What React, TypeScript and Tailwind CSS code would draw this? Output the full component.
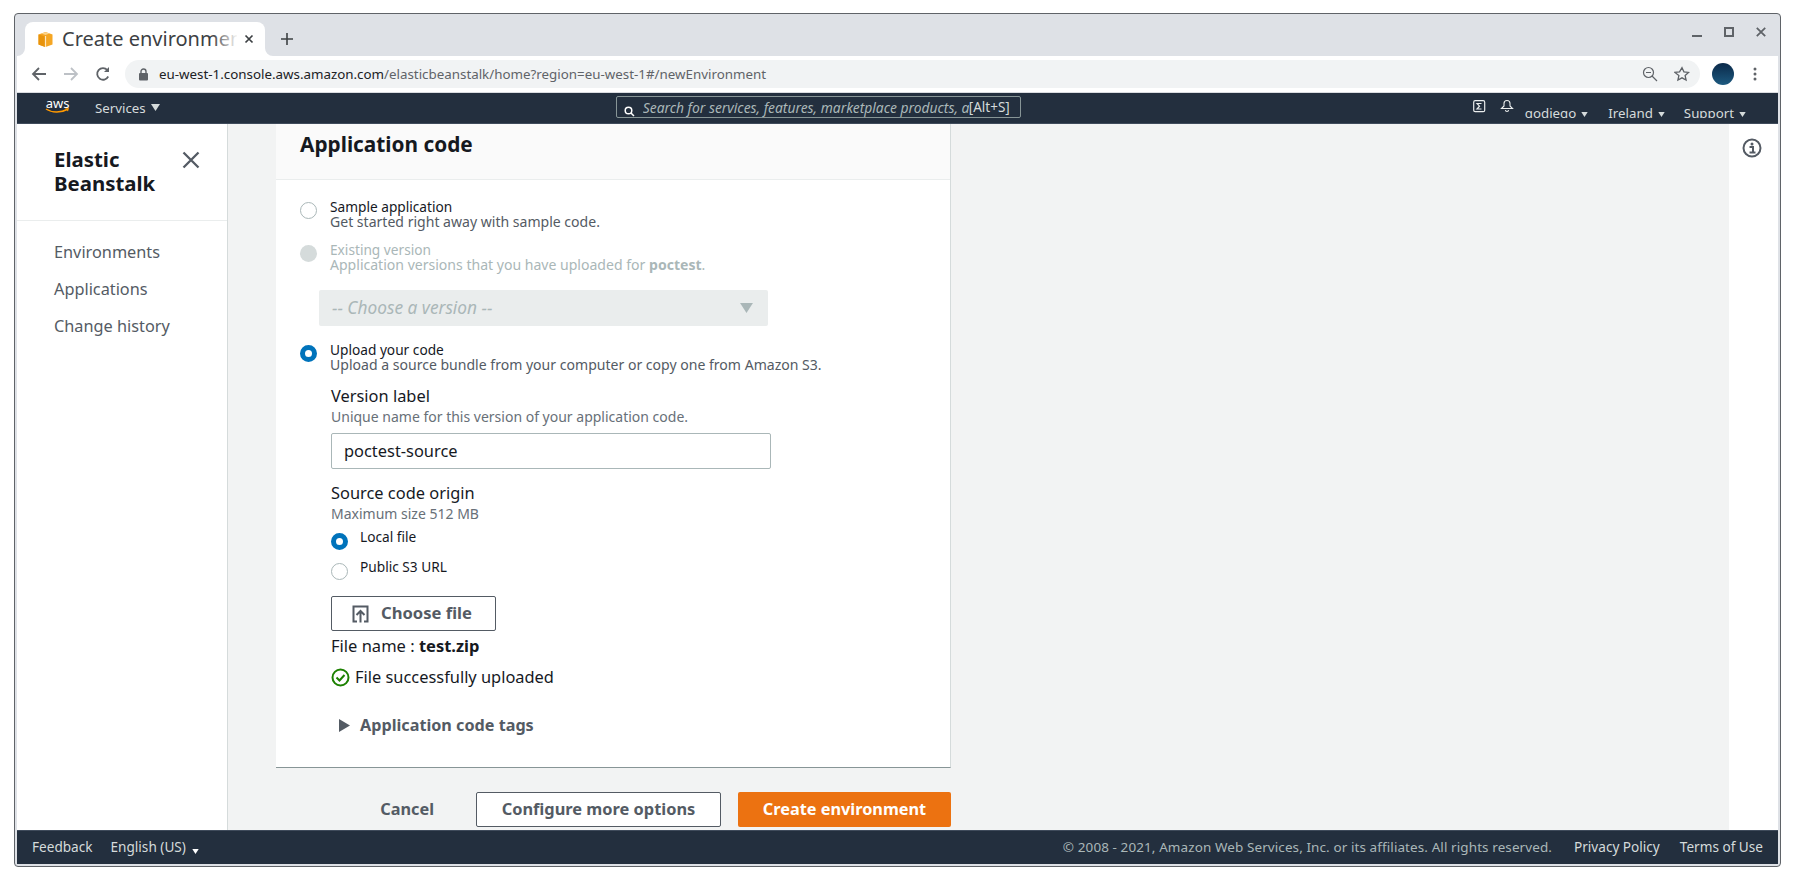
import React from "react";

const Tri = ({ c = "" }: { c?: string }) => (
  <svg width="9" height="7" viewBox="0 0 9 7" className={c}><path d="M0 0h9L4.5 7z" fill="currentColor" /></svg>
);

function Radio({ state }: { state: "off" | "on" | "disabled" }) {
  if (state === "on")
    return <span className="w-[17px] h-[17px] rounded-full border-[5px] border-[#0073bb] bg-white shrink-0" />;
  if (state === "disabled")
    return <span className="w-[17px] h-[17px] rounded-full bg-[#d5dbdb] shrink-0" />;
  return <span className="w-[17px] h-[17px] rounded-full border border-[#aab7b8] bg-white shrink-0" />;
}

function Option({ state, title, children, mt }: { state: "off" | "on" | "disabled"; title: string; children: React.ReactNode; mt: string }) {
  const dim = state === "disabled";
  return (
    <div className={`flex ${mt}`}>
      <div className="w-[54px] pl-[24px] pt-[3px] shrink-0 flex"><Radio state={state} /></div>
      <div>
        <div className={`text-[13.7px] leading-[15px] ${dim ? "text-[#aab7b8]" : "text-[#16191f]"}`}>{title}</div>
        <div className={`text-[14.05px] leading-[16px] ${dim ? "text-[#aab7b8]" : "text-[#545b64]"}`}>{children}</div>
      </div>
    </div>
  );
}

export default function App() {
  return (
    <div className="w-[1793px] h-[884px] bg-white pt-[13px] pl-[14px] overflow-hidden [font-family:'Noto_Sans',sans-serif]">
      <div className="w-[1767px] h-[854px] bg-[#dee1e6] border border-[#5f6368] border-t-[1.5px] rounded-[4px] px-[2px] pb-[2px] flex flex-col overflow-hidden">
        {/* tab strip */}
        <div className="h-[42px] flex items-end shrink-0">
          <div className="ml-[8px] w-[240px] h-[34px] bg-white rounded-t-[8px] flex items-center pl-[13px] relative">
            <svg width="8" height="8" viewBox="0 0 8 8" className="absolute -left-[8px] bottom-0"><path d="M8 0v8H0a8 8 0 0 0 8-8z" fill="#fff" /></svg>
            <svg width="8" height="8" viewBox="0 0 8 8" className="absolute -right-[8px] bottom-0"><path d="M0 0v8h8a8 8 0 0 1-8-8z" fill="#fff" /></svg>
            <svg width="15" height="15" viewBox="0 0 15 15" className="shrink-0">
              <path d="M7.500 0l7 2.500v10l-7 2.500-7-2.500v-10z" fill="#f5a623" />
              <path d="M7 4.500L.5 2.500v10L7 15z" fill="#e8930c" />
              <path d="M3.500 1.500l4-1.300 4 1.300-4 1.500z" fill="#fbd38d" />
              <path d="M6.900 4h1.200v11H6.900z" fill="#fde7c2" />
            </svg>
            <span className="ml-[9px] w-[175px] overflow-hidden whitespace-nowrap text-[20px] text-[#3c4043] leading-[26px]">Create environment</span>
            <span className="absolute left-[187px] top-0 w-[26px] h-full bg-gradient-to-r from-transparent to-white" />
            <svg width="10" height="10" viewBox="0 0 10 10" className="absolute right-[11px] top-[12px]"><path d="M1.500 1.500l7 7M8.500 1.500l-7 7" stroke="#3c4043" strokeWidth="1.700" /></svg>
          </div>
          <svg width="14" height="14" viewBox="0 0 14 14" className="ml-[15px] mb-[10px]"><path d="M7 1v12M1 7h12" stroke="#3c4043" strokeWidth="1.600" /></svg>
          <div className="ml-auto flex items-center gap-[22px] self-start mt-[13px] pr-[12px]">
            <span className="w-[10px] h-[10px] flex items-end"><span className="w-full h-[2px] bg-[#5f6368]" /></span>
            <span className="w-[10px] h-[10px] border-2 border-[#5f6368]" />
            <svg width="10" height="10" viewBox="0 0 10 10"><path d="M.8.8l8.400 8.400M9.200.8L.8 9.200" stroke="#5f6368" strokeWidth="1.800" /></svg>
          </div>
        </div>
        {/* toolbar */}
        <div className="h-[37px] bg-white flex items-center shrink-0 border-b border-[#dadce0]">
          <svg width="16" height="16" viewBox="0 0 16 16" className="ml-[14px]"><path d="M15 8H2M8 2L2 8l6 6" fill="none" stroke="#5f6368" strokeWidth="1.800" /></svg>
          <svg width="16" height="16" viewBox="0 0 16 16" className="ml-[16px]"><path d="M1 8h13M8 2l6 6-6 6" fill="none" stroke="#bdc1c6" strokeWidth="1.800" /></svg>
          <svg width="16" height="16" viewBox="0 0 16 16" className="ml-[16px]"><path d="M13.200 10.500A5.800 5.800 0 1 1 12.300 4" fill="none" stroke="#5f6368" strokeWidth="1.800" /><path d="M14 1v5H9z" fill="#5f6368" /></svg>
          <div className="ml-[14px] w-[1575px] h-[28px] rounded-full bg-[#f1f3f4] flex items-center pl-[13px] pr-[10px]">
            <svg width="11" height="13" viewBox="0 0 11 13"><path d="M3 5V3.500a2.500 2.500 0 0 1 5 0V5" fill="none" stroke="#5f6368" strokeWidth="1.400" /><rect x="1" y="5" width="9" height="7.500" rx="1" fill="#5f6368" /></svg>
            <span className="ml-[10px] text-[13.35px] text-[#202124] whitespace-nowrap">eu-west-1.console.aws.amazon.com<span className="text-[#5f6368]">/elasticbeanstalk/home?region=eu-west-1#/newEnvironment</span></span>
            <svg width="16" height="16" viewBox="0 0 16 16" className="ml-auto"><circle cx="6.500" cy="6.500" r="5" fill="none" stroke="#5f6368" strokeWidth="1.200" /><path d="M10 10l5 5M4 6.500h5" stroke="#5f6368" strokeWidth="1.200" /></svg>
            <svg width="16" height="16" viewBox="0 0 24 24" className="ml-[16px]"><path d="M12 2.500l2.900 6.300 6.900.8-5.100 4.700 1.400 6.800-6.100-3.400-6.100 3.400 1.400-6.800L1.300 9.600l7-.8z" fill="none" stroke="#5f6368" strokeWidth="2" /></svg>
          </div>
          <span className="ml-[12px] w-[22px] h-[22px] rounded-full bg-gradient-to-b from-[#0b2a4a] to-[#1d5a80] shrink-0" />
          <svg width="4" height="14" viewBox="0 0 4 14" className="ml-[19px]"><circle cx="2" cy="2" r="1.500" fill="#5f6368" /><circle cx="2" cy="7" r="1.500" fill="#5f6368" /><circle cx="2" cy="12" r="1.500" fill="#5f6368" /></svg>
        </div>
        {/* aws nav */}
        <div className="h-[31px] bg-[#232f3e] shrink-0 border-b border-[#3f4b5b] text-[#d5dbdb] text-[13.3px]">
          <div className="h-[25px] flex items-start overflow-hidden">
            <div className="ml-[28px] mt-[5px] w-[25px] flex flex-col items-center text-white">
              <span className="text-[13px] leading-[10px] text-white">aws</span>
              <svg width="25" height="6" viewBox="0 0 25 6"><path d="M1 1c6 4 15 4 21 .5" fill="none" stroke="#ff9900" strokeWidth="1.500" /><path d="M20 .5l4-.5-1 3.500z" fill="#ff9900" /></svg>
            </div>
            <span className="ml-[25px] mt-[6px] leading-[18px]">Services</span>
            <Tri c="ml-[5px] mt-[11px] text-[#d5dbdb]" />
            <div className="ml-[456px] mt-[3px] w-[405px] h-[22px] border border-[#879596] rounded-[2px] flex items-center pl-[7px] shrink-0">
              <svg width="11" height="11" viewBox="0 0 11 11" className="mt-[8px] shrink-0"><circle cx="4.500" cy="4.500" r="3.300" fill="none" stroke="#fff" strokeWidth="1.500" /><path d="M7 7l3 3" stroke="#fff" strokeWidth="1.500" /></svg>
              <span className="ml-[8px] mt-[2px] w-[326px] overflow-hidden whitespace-nowrap italic text-[13.85px] text-[#aab7b8]">Search for services, features, marketplace products, and docs</span>
              <span className="mt-[1px] text-[13.5px] text-[#d5dbdb]">[Alt+S]</span>
            </div>
            <svg width="14" height="14" viewBox="0 0 14 14" className="ml-[452px] mt-[7px] shrink-0"><rect x=".7" y=".7" width="11" height="11" rx="1.500" fill="none" stroke="#eaeded" strokeWidth="1.200" /><path d="M8.500 3.500H4L6.500 6.200 4 9h4.500" fill="none" stroke="#eaeded" strokeWidth="1.200" /></svg>
            <svg width="14" height="14" viewBox="0 0 14 14" className="ml-[13px] mt-[6px] shrink-0"><path d="M1.500 9.500L4 7V4.500a3 3 0 0 1 6 0V7l2.500 2.500zM5.500 11a1.500 1.500 0 0 0 3 0" fill="none" stroke="#eaeded" strokeWidth="1.100" /></svg>
            <span className="ml-[11px] mt-[11px] leading-[18px]">godiego</span><Tri c="ml-[5px] mt-[19px] w-[7px] h-[5px]" />
            <span className="ml-[20px] mt-[11px] leading-[18px]">Ireland</span><Tri c="ml-[5px] mt-[19px] w-[7px] h-[5px]" />
            <span className="ml-[19px] mt-[11px] leading-[18px]">Support</span><Tri c="ml-[5px] mt-[19px] w-[7px] h-[5px]" />
          </div>
        </div>
        {/* body */}
        <div className="flex-1 min-h-0 flex bg-[#f2f3f3] overflow-hidden">
          <aside className="w-[211px] bg-white border-r border-[#d5dbdb] shrink-0">
            <div className="h-[97px] border-b border-[#eaeded] pl-[37px] pt-[23px] relative">
              <div className="text-[20.4px] leading-[24px] font-bold text-[#16191f]">Elastic<br />Beanstalk</div>
              <svg width="18" height="18" viewBox="0 0 18 18" className="absolute left-[165px] top-[27px]"><path d="M1.500 1.500l15 15M16.500 1.500l-15 15" stroke="#545b64" strokeWidth="2.300" /></svg>
            </div>
            <nav className="pl-[37px] pt-[13px] text-[16.3px] leading-[37px] text-[#545b64]">
              <div>Environments</div>
              <div>Applications</div>
              <div>Change history</div>
            </nav>
          </aside>
          <main className="flex-1 min-w-0 pl-[48px] flex">
            <div className="w-[675px] shrink-0">
              <section className="h-[644px] bg-white border-r border-b border-r-[#d5dbdb] border-b-[#879596]">
                <div className="h-[56px] bg-[#fafafa] border-b border-[#eaeded] pl-[24px] pt-[5px]">
                  <h2 className="text-[20.8px] leading-[30px] font-bold text-[#16191f]">Application code</h2>
                </div>
                <Option state="off" title="Sample application" mt="mt-[19px]">Get started right away with sample code.</Option>
                <Option state="disabled" title="Existing version" mt="mt-[12px]">Application versions that you have uploaded for <b>poctest</b>.</Option>
                <div className="ml-[43px] mt-[17px] w-[449px] h-[36px] bg-[#eaeded] rounded-[2px] flex items-center justify-between pl-[13px] pr-[15px]">
                  <span className="italic text-[17.3px] text-[#aab7b8]">-- Choose a version --</span>
                  <Tri c="w-[13px] h-[10px] text-[#aab7b8]" />
                </div>
                <Option state="on" title="Upload your code" mt="mt-[16px]">Upload a source bundle from your computer or copy one from Amazon S3.</Option>
                <div className="pl-[55px]">
                  <div className="mt-[12px] text-[16.4px] leading-[22px] text-[#16191f]">Version label</div>
                  <div className="text-[14px] leading-[20px] text-[#687078]">Unique name for this version of your application code.</div>
                  <div className="mt-[6px] w-[440px] h-[36px] border border-[#aab7b8] rounded-[2px] flex items-center pl-[12px] text-[16.4px] text-[#16191f]">poctest-source</div>
                  <div className="mt-[13px] text-[16.4px] leading-[22px] text-[#16191f]">Source code origin</div>
                  <div className="text-[14px] leading-[20px] text-[#687078]">Maximum size 512 MB</div>
                  <div className="mt-[3px] flex h-[30px]">
                    <span className="pt-[6px] flex"><Radio state="on" /></span>
                    <span className="ml-[12px] text-[13.7px] leading-[20px] text-[#16191f]">Local file</span>
                  </div>
                  <div className="flex h-[30px]">
                    <span className="pt-[6px] flex"><Radio state="off" /></span>
                    <span className="ml-[12px] text-[13.7px] leading-[20px] text-[#16191f]">Public S3 URL</span>
                  </div>
                  <div className="mt-[9px] w-[165px] h-[35px] border border-[#545b64] rounded-[2px] flex items-center justify-center gap-[12px] pr-[3px] text-[16.6px] font-bold text-[#545b64]">
                    <svg width="17" height="18" viewBox="0 0 17 18"><path d="M5 16.500H1.500V1.500h14v15H12" fill="none" stroke="#545b64" strokeWidth="2" /><path d="M8.500 17.500V6M4.500 10l4-4 4 4" fill="none" stroke="#545b64" strokeWidth="2" /></svg>
                    <span>Choose file</span>
                  </div>
                  <div className="mt-[3px] text-[16.5px] leading-[24px] text-[#16191f]">File name : <b>test.zip</b></div>
                  <div className="mt-[7px] flex items-center text-[16.4px] leading-[24px] text-[#16191f]">
                    <svg width="19" height="19" viewBox="0 0 19 19" className="mr-[5px]"><circle cx="9.500" cy="9.500" r="8" fill="none" stroke="#1d8102" strokeWidth="2" /><path d="M5.500 9.500l3 3 5-5.500" fill="none" stroke="#1d8102" strokeWidth="2" /></svg>
                    File successfully uploaded
                  </div>
                  <div className="mt-[24px] ml-[8px] flex items-center text-[16.2px] leading-[24px] font-bold text-[#545b64]">
                    <svg width="11" height="13" viewBox="0 0 11 13" className="mr-[10px]"><path d="M0 0l11 6.500L0 13z" fill="#545b64" /></svg>
                    Application code tags
                  </div>
                </div>
              </section>
              <div className="mt-[24px] flex items-center justify-end">
                <span className="text-[16.3px] font-bold text-[#545b64] mr-[42px]">Cancel</span>
                <span className="w-[245px] h-[35px] bg-white border border-[#545b64] rounded-[2px] flex items-center justify-center text-[16.4px] font-bold text-[#545b64]">Configure more options</span>
                <span className="ml-[17px] w-[213px] h-[35px] bg-[#ec7211] rounded-[2px] flex items-center justify-center text-[16.3px] font-bold text-white">Create environment</span>
              </div>
            </div>
            <div className="flex-1" />
            <aside className="w-[49px] bg-white shrink-0 flex justify-center pt-[14px] pr-[3px]">
              <svg width="20" height="20" viewBox="0 0 20 20"><circle cx="10" cy="10" r="8.500" fill="none" stroke="#545b64" strokeWidth="2" /><circle cx="10" cy="6" r="1.500" fill="#545b64" /><path d="M7.500 9h3.500v5M7.500 14.500h6" fill="none" stroke="#545b64" strokeWidth="2" /></svg>
            </aside>
          </main>
        </div>
        {/* footer */}
        <footer className="h-[34px] bg-[#232f3e] border-t border-[#3f4b5b] flex items-center text-[13.6px] text-[#d5dbdb] shrink-0">
          <span className="ml-[15px] -mt-[1px]">Feedback</span>
          <span className="ml-[18px]">English (US)</span>
          <Tri c="ml-[6px] mt-[8px] text-white w-[7px] h-[5px]" />
          <span className="ml-auto text-[#aab7b8] text-[13.47px] tracking-[0.1px]">© 2008 - 2021, Amazon Web Services, Inc. or its affiliates. All rights reserved.</span>
          <span className="ml-[22px]">Privacy Policy</span>
          <span className="ml-[20px] mr-[15px]">Terms of Use</span>
        </footer>
      </div>
    </div>
  );
}
